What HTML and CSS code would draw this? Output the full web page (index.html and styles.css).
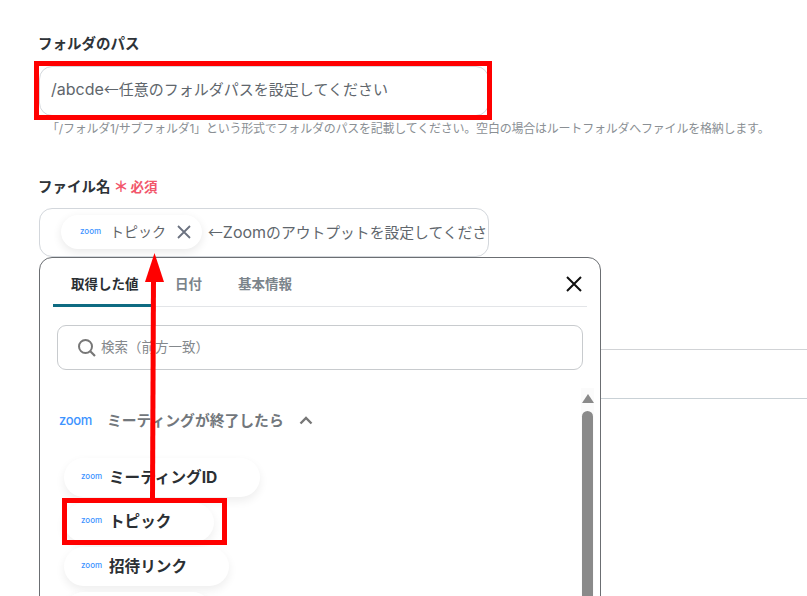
FILE: index.html
```html
<!DOCTYPE html>
<html lang="ja">
<head>
<meta charset="utf-8">
<title>フォルダのパス</title>
<link rel="stylesheet" href="styles.css">
</head>
<body>
<main class="form">
  <section class="field">
    <div class="label">フォルダのパス</div>
    <div class="input input-path"><span class="input-text"><span class="latin">/abcde</span><span class="cjk">←</span>任意のフォルダパスを設定してください</span></div>
    <p class="help">「/フォルダ1/サブフォルダ1」という形式でフォルダのパスを記載してください。空白の場合はルートフォルダへファイルを格納します。</p>
  </section>
  <section class="field field-file">
    <div class="label">ファイル名<span class="star">＊</span><span class="req">必須</span></div>
    <div class="input input-tags">
      <span class="chip">
        <span class="zoom zoom-s">zoom</span>
        <span class="chip-name">トピック</span>
        <svg class="chip-x" width="14" height="14" viewBox="0 0 14 14"><path d="M1 1L13 13M13 1L1 13" stroke="#6b7280" stroke-width="1.8" fill="none"/></svg>
      </span>
      <span class="input-text input-clip"><span class="cjk">←</span><span class="latin">Zoom</span>のアウトプットを設定してください</span>
    </div>
    <div class="behind"></div>
    <div class="popup">
      <div class="tabs">
        <div class="tab tab-active">取得した値</div>
        <div class="tab tab-date">日付</div>
        <div class="tab">基本情報</div>
        <svg class="close" width="18" height="18" viewBox="0 0 18 18"><path d="M2 2L16 16M16 2L2 16" stroke="#111" stroke-width="2" fill="none"/></svg>
      </div>
      <div class="search">
        <svg width="20" height="20" viewBox="0 0 20 20"><circle cx="8.5" cy="8.5" r="6.5" stroke="#777" stroke-width="2" fill="none"/><path d="M13.3 13.3L18 18" stroke="#777" stroke-width="2.2" fill="none"/></svg>
        <span class="search-text">検索（前方一致）</span>
      </div>
      <div class="list-wrap">
        <div class="list">
          <div class="group">
            <span class="zoom zoom-l">zoom</span>
            <span class="group-name">ミーティングが終了したら</span>
            <svg width="14" height="9" viewBox="0 0 14 9"><path d="M1.5 7.5L7 2L12.5 7.5" stroke="#777" stroke-width="2.4" fill="none"/></svg>
          </div>
          <div class="pills">
            <div class="pill pill-id"><span class="zoom zoom-s">zoom</span><span>ミーティングID</span></div>
            <div class="pill pill-topic"><span class="zoom zoom-s">zoom</span><span>トピック</span></div>
            <div class="pill pill-link"><span class="zoom zoom-s">zoom</span><span>招待リンク</span></div>
            <div class="pill pill-next"></div>
          </div>
        </div>
        <div class="scrollbar">
          <div class="scroll-up"></div>
          <div class="scroll-thumb"></div>
        </div>
      </div>
    </div>
  </section>
</main>
<div class="mark mark-path"></div>
<div class="mark mark-topic"></div>
<svg class="arrow" width="30" height="250" viewBox="0 0 30 250"><path d="M12.5 245L13.5 25" stroke="#f00" stroke-width="5" fill="none"/><path d="M14.5 0L24 29H5Z" fill="#f00"/></svg>
</body>
</html>
```
FILE: styles.css
```css
* { box-sizing: border-box; }
html, body { margin: 0; height: 596px; overflow: hidden; background: #fff; }
body { font-family: Inter, "Noto Sans CJK JP", sans-serif; color: #2b2f33; position: relative; }
.form { padding: 34px 0 0 39px; }
.label { font-size: 14.5px; font-weight: 700; line-height: 20px; color: #2e3338; margin-left: -1px; display: flex; align-items: center; }
.star { color: #f2566b; font-size: 15px; font-weight: 700; margin-left: 3px; width: 17px; }
.req { color: #f2566b; font-size: 13.5px; font-weight: 700; }
.input { width: 450px; height: 50px; margin-top: 12px; border: 1px solid #d3d7dc; border-radius: 13px; display: flex; align-items: center; padding-left: 11px; font-size: 15px; color: #60666c; background: #fff; }
.input-path { padding-bottom: 5px; }
.input-text { white-space: nowrap; }
.latin { font-size: 16px; }
.cjk { font-family: "Noto Sans CJK JP", sans-serif; }
.help { margin: 3px 0 0 8px; font-size: 12px; line-height: 20px; color: #8a8f94; white-space: nowrap; letter-spacing: -0.22px; }
.field-file { margin-top: 38px; position: relative; }
.input-tags { height: 49px; margin-top: 11px; padding-left: 21px; overflow: hidden; padding-bottom: 1px; }
.input-clip { margin-left: 6px; padding-bottom: 2px; font-size: 14.8px; }
.chip { display: flex; flex: none; align-items: center; height: 34px; width: 141px; border-radius: 17px; background: #fff; box-shadow: 0 3px 10px rgba(0,0,0,.09); padding: 0 0 2px 19px; font-size: 14px; color: #5f6468; }
.chip-name { margin-left: 9px; }
.chip-x { margin-left: 11px; margin-top: 2px; }
.zoom { color: #3d94ff; font-weight: 500; font-family: Inter, sans-serif; }
.zoom-s { font-size: 8px; width: 21px; flex: none; }
.zoom-l { font-size: 13px; width: 33px; flex: none; letter-spacing: -0.3px; }
.behind { width: 768px; height: 50px; margin-top: 92px; border-top: 1px solid #d1d3d6; border-bottom: 1px solid #c9d1d6; }
.popup { position: absolute; top: 80px; left: 0; width: 562px; height: 400px; background: #fff; border: 1px solid #6b6e72; border-radius: 13px 13px 0 0; }
.tabs { display: flex; height: 49px; margin: 0 13px; border-bottom: 1px solid #e3e5e8; position: relative; }
.tab { font-size: 13.5px; font-weight: 700; line-height: 52px; color: #7b848b; padding: 0 18px; white-space: nowrap; }
.tab-active { color: #2b2f33; border-bottom: 3px solid #0e6b82; height: 49px; border-radius: 2px 2px 0 0; width: 99px; margin-right: 5px; }
.tab-date { margin-right: 0; }
.close { margin: 17px 4px 0 auto; }
.search { display: flex; align-items: center; gap: 4px; height: 45px; margin: 18px 17px 0; border: 1px solid #c8cbce; border-radius: 9px; padding-left: 19px; font-size: 13.5px; color: #84888c; }
.search-text { padding-bottom: 3px; }
.list-wrap { display: flex; margin-top: 18px; padding-left: 19px; }
.list { width: 523px; }
.group { display: flex; align-items: center; height: 28px; margin-top: 18px; }
.group-name { font-size: 14.8px; font-weight: 700; color: #72777c; margin-left: 15px; margin-right: 15px; padding-bottom: 2px; white-space: nowrap; }
.pills { display: flex; flex-direction: column; gap: 5.5px; margin-top: 24px; margin-left: 5px; }
.pill { height: 39px; flex: none; border-radius: 20px; background: #fff; box-shadow: 0 4px 10px rgba(0,0,0,.07); display: flex; align-items: center; padding: 0 0 4px 17px; font-size: 15.6px; font-weight: 700; color: #2b2f33; white-space: nowrap; }
.pill .zoom { margin-right: 7px; }
.pill-id { width: 196px; }
.pill-topic { width: 150px; }
.pill-link { width: 165px; }
.pill-next { width: 148px; }
.scrollbar { width: 13px; background: #fbfbfb; margin-left: -1px; padding: 6px 1px 0; height: 230px; }
.scroll-up { width: 0; height: 0; border-left: 6px solid transparent; border-right: 6px solid transparent; border-bottom: 9px solid #8a8a8a; margin: 0 auto 8px -0.5px; }
.scroll-thumb { width: 11px; height: 200px; background: #8a8a8a; border-radius: 6px 6px 0 0; }
.mark { position: absolute; border: 5px solid #f00; }
.mark-path { left: 34px; top: 61px; width: 458px; height: 59px; }
.mark-topic { left: 62px; top: 498px; width: 165px; height: 47px; }
.arrow { position: absolute; left: 140px; top: 253px; }
```
